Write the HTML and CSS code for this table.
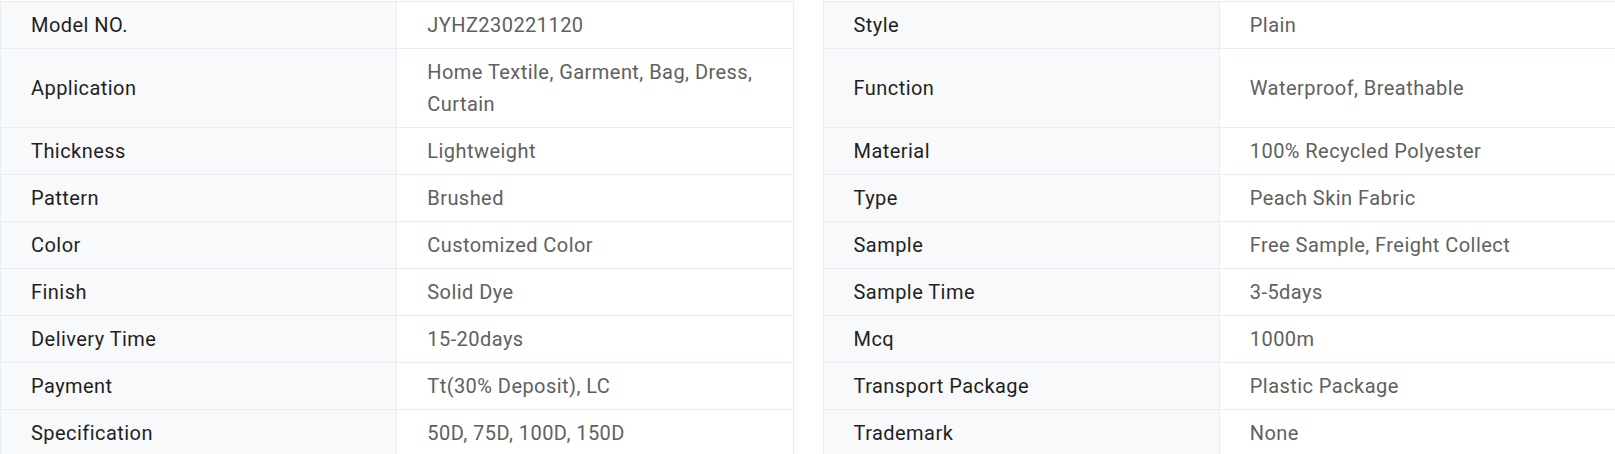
FILE: index.html
```html
<!DOCTYPE html>
<html lang="en">
<head>
    <meta charset="UTF-8">
    <meta name="viewport" content="width=device-width, initial-scale=1.0">
    <title>Product Specifications</title>
    <link rel="stylesheet" href="styles.css">
</head>
<body>
    <table class="spec-table">
        <colgroup>
            <col><col><col class="gap-col"><col><col>
        </colgroup>
        <tr>
            <td class="spec-name">Model NO.</td><td class="spec-value">JYHZ230221120</td>
            <td class="spec-gap"></td>
            <td class="spec-name">Style</td><td class="spec-value">Plain</td>
        </tr>
        <tr>
            <td class="spec-name">Application</td><td class="spec-value">Home Textile, Garment, Bag, Dress, Curtain</td>
            <td class="spec-gap"></td>
            <td class="spec-name">Function</td><td class="spec-value">Waterproof, Breathable</td>
        </tr>
        <tr>
            <td class="spec-name">Thickness</td><td class="spec-value">Lightweight</td>
            <td class="spec-gap"></td>
            <td class="spec-name">Material</td><td class="spec-value">100% Recycled Polyester</td>
        </tr>
        <tr>
            <td class="spec-name">Pattern</td><td class="spec-value">Brushed</td>
            <td class="spec-gap"></td>
            <td class="spec-name">Type</td><td class="spec-value">Peach Skin Fabric</td>
        </tr>
        <tr>
            <td class="spec-name">Color</td><td class="spec-value">Customized Color</td>
            <td class="spec-gap"></td>
            <td class="spec-name">Sample</td><td class="spec-value">Free Sample, Freight Collect</td>
        </tr>
        <tr>
            <td class="spec-name">Finish</td><td class="spec-value">Solid Dye</td>
            <td class="spec-gap"></td>
            <td class="spec-name">Sample Time</td><td class="spec-value">3-5days</td>
        </tr>
        <tr>
            <td class="spec-name">Delivery Time</td><td class="spec-value">15-20days</td>
            <td class="spec-gap"></td>
            <td class="spec-name">Mcq</td><td class="spec-value">1000m</td>
        </tr>
        <tr>
            <td class="spec-name">Payment</td><td class="spec-value">Tt(30% Deposit), LC</td>
            <td class="spec-gap"></td>
            <td class="spec-name">Transport Package</td><td class="spec-value">Plastic Package</td>
        </tr>
        <tr>
            <td class="spec-name">Specification</td><td class="spec-value">50D, 75D, 100D, 150D</td>
            <td class="spec-gap"></td>
            <td class="spec-name">Trademark</td><td class="spec-value">None</td>
        </tr>
    </table>
</body>
</html>
```

FILE: styles.css
```css
body {
    font-family: Roboto, 'Noto Sans', Arial, sans-serif;
    margin: 0;
    padding: 1px 0 0 0;
    background-color: #fff;
}
.spec-table {
    width: 1616px;
    border-collapse: collapse;
    table-layout: fixed;
}
.gap-col {
    width: 30px;
}
.spec-table td {
    border: 1px solid #e9edf2;
    padding: 7px 30px;
    font-size: 20px;
    line-height: 32px;
    letter-spacing: 0.45px;
    vertical-align: middle;
}
.spec-table td.spec-gap {
    border: none;
    padding: 0;
    background-color: #fff;
}
.spec-name {
    background-color: #f8f9fb;
    color: #1f1f1f;
}
.spec-value {
    background-color: #fff;
    color: #606060;
}
```
